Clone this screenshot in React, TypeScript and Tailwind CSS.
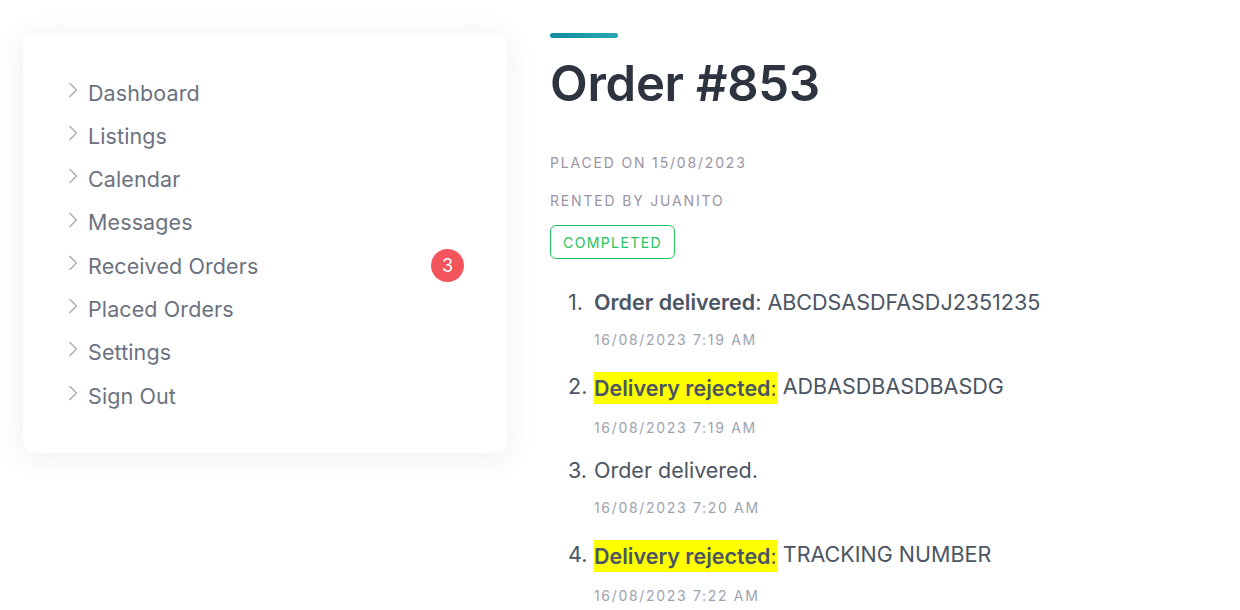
const menu = [
  { label: "Dashboard" },
  { label: "Listings" },
  { label: "Calendar" },
  { label: "Messages" },
  { label: "Received Orders", badge: 3 },
  { label: "Placed Orders" },
  { label: "Settings" },
  { label: "Sign Out" },
];

type Event = { n: number; title: string; detail?: string; highlight?: boolean; bold?: boolean; date: string };

const events: Event[] = [
  { n: 1, title: "Order delivered", detail: "ABCDSASDFASDJ2351235", bold: true, date: "16/08/2023 7:19 AM" },
  { n: 2, title: "Delivery rejected", detail: "ADBASDBASDBASDG", bold: true, highlight: true, date: "16/08/2023 7:19 AM" },
  { n: 3, title: "Order delivered.", date: "16/08/2023 7:20 AM" },
  { n: 4, title: "Delivery rejected", detail: "TRACKING NUMBER", bold: true, highlight: true, date: "16/08/2023 7:22 AM" },
];

function Chevron() {
  return (
    <svg width="10" height="16" viewBox="0 0 10 16" className="mr-[10px] -mt-[6px] text-[#9ca3af]">
      <polyline points="1.5,1 8.5,8 1.5,15" fill="none" stroke="currentColor" strokeWidth="1.1" />
    </svg>
  );
}

export default function App() {
  return (
    <div
      className="min-h-screen bg-white flex items-start pl-[23px] pt-[33px] gap-[43px]"
      style={{ fontFamily: "Inter, 'Noto Sans', sans-serif" }}
    >
      <div className="w-[484px] bg-white rounded-xl shadow-[0_4px_30px_rgba(30,40,80,0.08)] pt-[38px] pb-[36px] pl-[45px] pr-[43px]">
        {menu.map(m => (
          <div key={m.label} className="h-[43.3px] flex items-center justify-between">
            <div className="flex items-center">
              <Chevron />
              <span className="text-[21.5px] text-[#6b7280] tracking-[0.005em]">{m.label}</span>
            </div>
            {m.badge && (
              <span className="w-[33px] h-[33px] rounded-full bg-[#f4555c] text-white text-[18px] flex items-center justify-center">
                {m.badge}
              </span>
            )}
          </div>
        ))}
      </div>

      <div className="flex flex-col">
        <div className="w-[68px] h-[5px] rounded-full bg-gradient-to-r from-[#0b8aa0] to-[#2ba7b5]" />
        <h1 className="text-[49px] font-semibold text-[#2d3440] leading-none mt-[21px] tracking-[-0.005em]">Order #853</h1>
        <div className="mt-[44px] text-[14px] tracking-[0.13em] text-[#9b93a3] uppercase">Placed on 15/08/2023</div>
        <div className="mt-[17px] text-[14px] tracking-[0.13em] text-[#9b93a3] uppercase">Rented by Juanito</div>
        <div className="mt-[14px] self-start border border-[#22c55e] rounded-md px-[12px] h-[34px] flex items-center text-[14px] tracking-[0.1em] text-[#22c55e]">
          COMPLETED
        </div>
        <ol className="mt-[29px] pl-[18px]">
          {events.map(e => (
            <li key={e.n} className="h-[84px]">
              <div className="text-[21.5px] text-[#4b5563] leading-[28px] flex">
                <span className="w-[26px]">{e.n}.</span>
                {e.bold ? (
                  <>
                    <span className={e.highlight ? "bg-[#ffff00] py-[2px]" : ""}>
                      <span className="font-semibold">{e.title}</span>:
                    </span>
                    <span>&nbsp;{e.detail}</span>
                  </>
                ) : (
                  <span>{e.title}</span>
                )}
              </div>
              <div className="pl-[26px] mt-[13px] text-[14px] tracking-[0.12em] text-[#9ca3af]">{e.date}</div>
            </li>
          ))}
        </ol>
      </div>
    </div>
  );
}
